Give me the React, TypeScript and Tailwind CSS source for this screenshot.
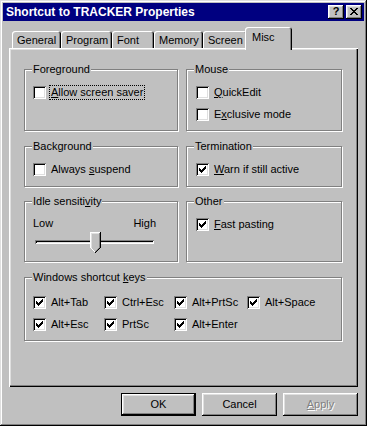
import React from "react";

const raised =
  "shadow-[inset_-1px_-1px_#000,inset_1px_1px_#fff,inset_-2px_-2px_#808080,inset_2px_2px_#dfdfdf]";

function CheckMark() {
  // classic 7x7 pixel tick
  const rows = ["......X", ".....XX", "X...XXX", "XX.XXX.", "XXXXX..", ".XXX...", "..X...."];
  return (
    <svg width="7" height="7" viewBox="0 0 7 7" shapeRendering="crispEdges">
      {rows.map((r, y) =>
        r.split("").map((c, x) => (c === "X" ? <rect key={`${x}-${y}`} x={x} y={y} width="1" height="1" fill="#000" /> : null))
      )}
    </svg>
  );
}

function Box({ checked = false }: { checked?: boolean }) {
  return (
    <span className="w-[13px] h-[13px] shrink-0 bg-white flex items-center justify-center shadow-[inset_1px_1px_#808080,inset_-1px_-1px_#fff,inset_2px_2px_#000,inset_-2px_-2px_#dfdfdf]">
      {checked && <CheckMark />}
    </span>
  );
}

function Option({ label, checked, focus }: { label: React.ReactNode; checked?: boolean; focus?: boolean }) {
  return (
    <div className="flex items-center h-[13px] gap-[4px]">
      <Box checked={checked} />
      <span className={`leading-[13px] whitespace-nowrap ${focus ? "outline outline-1 outline-dotted outline-black px-[1px]" : "px-[1px]"}`}>
        {label}
      </span>
    </div>
  );
}

function Group({ title, className = "", children }: { title: React.ReactNode; className?: string; children?: React.ReactNode }) {
  return (
    <div className={`relative border border-[#808080] shadow-[inset_1px_1px_#fff,1px_1px_#fff] ${className}`}>
      <span className="absolute -top-[7px] left-[7px] px-[1px] bg-[#c0c0c0] leading-[13px] whitespace-nowrap">{title}</span>
      {children}
    </div>
  );
}

function Thumb() {
  return (
    <svg width="11" height="21" viewBox="0 0 11 21" shapeRendering="crispEdges">
      <polygon points="0,0 11,0 11,16 6,21 5,21 0,16" fill="#c0c0c0" />
      <rect x="0" y="0" width="10" height="1" fill="#fff" />
      <rect x="0" y="0" width="1" height="16" fill="#fff" />
      <rect x="1" y="1" width="8" height="1" fill="#dfdfdf" />
      <rect x="1" y="1" width="1" height="15" fill="#dfdfdf" />
      <rect x="10" y="0" width="1" height="16" fill="#000" />
      <rect x="9" y="1" width="1" height="15" fill="#808080" />
      {[0, 1, 2, 3, 4].map((i) => (
        <rect key={`l${i}`} x={i + 1} y={16 + i} width="1" height="1" fill="#fff" />
      ))}
      {[0, 1, 2, 3, 4].map((i) => (
        <rect key={`r${i}`} x={9 - i} y={16 + i} width="1" height="1" fill="#000" />
      ))}
      {[0, 1, 2, 3].map((i) => (
        <rect key={`g${i}`} x={8 - i} y={16 + i} width="1" height="1" fill="#808080" />
      ))}
    </svg>
  );
}

const tabs = ["General", "Program", "Font", "Memory", "Screen"];
const tabWidths = ["w-[49px]", "w-[51px]", "w-[42px]", "w-[49px]", "w-[44px]"];

export default function App() {
  return (
    <div className="w-[367px] h-[426px] bg-[#c0c0c0] p-[3px] flex flex-col font-['Liberation_Sans',Arial,sans-serif] text-[11px] text-black shadow-[inset_-1px_-1px_#000,inset_1px_1px_#dfdfdf,inset_-2px_-2px_#808080,inset_2px_2px_#fff] select-none">
      {/* Title bar */}
      <div className="h-[18px] bg-[#000080] flex items-center pl-[3px] pr-[2px]">
        <span className="text-white font-bold text-[12px] leading-none">Shortcut to TRACKER Properties</span>
        <div className="ml-auto flex gap-[2px]">
          <span className={`w-[16px] h-[14px] bg-[#c0c0c0] ${raised} flex items-center justify-center font-bold text-[11px] leading-none pb-[1px]`}>
            ?
          </span>
          <span className={`w-[16px] h-[14px] bg-[#c0c0c0] ${raised} flex items-center justify-center pb-[1px]`}>
            <svg width="8" height="7" viewBox="0 0 8 7" shapeRendering="crispEdges">
              {[0, 1, 2, 3, 4, 5, 6].map((i) => (
                <React.Fragment key={i}>
                  <rect x={i} y={i} width="2" height="1" fill="#000" />
                  <rect x={6 - i} y={i} width="2" height="1" fill="#000" />
                </React.Fragment>
              ))}
            </svg>
          </span>
        </div>
      </div>

      {/* Tab strip */}
      <div className="mt-[6px] ml-[9px] h-[21px] flex items-end relative z-10">
        {tabs.map((t, i) => (
          <div
            key={t}
            className={`${tabWidths[i]} h-[17px] rounded-t-[3px] pl-[5px] pt-[3px] leading-[13px] shadow-[inset_1px_1px_#fff,inset_-1px_0_#000,inset_-2px_0_#808080]`}
          >
            {t}
          </div>
        ))}
        <div className="w-[47px] h-[23px] -mb-[2px] -ml-[2px] rounded-t-[3px] pl-[7px] pt-[4px] leading-[13px] bg-[#c0c0c0] shadow-[inset_1px_1px_#fff,inset_-1px_0_#000,inset_-2px_0_#808080]">
          Misc
        </div>
      </div>

      {/* Panel */}
      <div className="ml-[6px] w-[349px] h-[339px] pt-[21px] pl-[15px] shadow-[inset_1px_1px_#fff,inset_-1px_-1px_#000,inset_-2px_-2px_#808080,inset_2px_2px_#dfdfdf]">
        <div className="grid grid-cols-[154px_156px] gap-x-[8px]">
          <Group title="Foreground" className="h-[62px] pt-[16px] pl-[8px]">
            <Option
              focus
              label={
                <>
                  <u>A</u>llow screen saver
                </>
              }
            />
          </Group>
          <Group title="Mouse" className="h-[62px] pt-[16px] pl-[9px] flex flex-col gap-[9px]">
            <Option
              label={
                <>
                  <u>Q</u>uickEdit
                </>
              }
            />
            <Option
              label={
                <>
                  E<u>x</u>clusive mode
                </>
              }
            />
          </Group>

          <Group title="Background" className="mt-[15px] h-[41px] pt-[16px] pl-[8px]">
            <Option
              label={
                <>
                  Always <u>s</u>uspend
                </>
              }
            />
          </Group>
          <Group title="Termination" className="mt-[15px] h-[41px] pt-[16px] pl-[9px]">
            <Option
              checked
              label={
                <>
                  <u>W</u>arn if still active
                </>
              }
            />
          </Group>

          <Group
            title={
              <>
                Idle sensiti<u>v</u>ity
              </>
            }
            className="mt-[14px] h-[61px] pt-[15px] pl-[8px]"
          >
            <div className="w-[123px] flex justify-between leading-[13px]">
              <span>Low</span>
              <span>High</span>
            </div>
            <div className="relative ml-[2px] mt-[2px] w-[119px] h-[22px]">
              <div className="absolute left-0 right-0 top-[8px] h-[4px] shadow-[inset_1px_1px_#808080,inset_-1px_-1px_#fff,inset_2px_2px_#000,inset_-2px_-2px_#dfdfdf]" />
              <div className="absolute left-[55px] top-0 leading-none">
                <Thumb />
              </div>
            </div>
          </Group>
          <Group title="Other" className="mt-[14px] h-[61px] pt-[16px] pl-[9px]">
            <Option
              checked
              label={
                <>
                  <u>F</u>ast pasting
                </>
              }
            />
          </Group>

          <Group
            title={
              <>
                Windows shortcut <u>k</u>eys
              </>
            }
            className="col-span-2 mt-[15px] h-[64px] pt-[18px] pl-[8px]"
          >
            <div className="grid grid-cols-[71px_70px_73px_auto] gap-y-[9px]">
              <Option checked label="Alt+Tab" />
              <Option checked label="Ctrl+Esc" />
              <Option checked label="Alt+PrtSc" />
              <Option checked label="Alt+Space" />
              <Option checked label="Alt+Esc" />
              <Option checked label="PrtSc" />
              <Option checked label="Alt+Enter" />
            </div>
          </Group>
        </div>
      </div>

      {/* Buttons */}
      <div className="mt-[6px] mr-[6px] flex justify-end gap-[6px]">
        <button className="w-[75px] h-[23px] border border-black bg-[#c0c0c0] shadow-[inset_-1px_-1px_#000,inset_1px_1px_#fff,inset_-2px_-2px_#808080,inset_2px_2px_#dfdfdf] leading-none">
          OK
        </button>
        <button className={`w-[75px] h-[23px] bg-[#c0c0c0] ${raised} leading-none`}>Cancel</button>
        <button className={`w-[75px] h-[23px] bg-[#c0c0c0] ${raised} leading-none text-[#808080] [text-shadow:1px_1px_0_#fff]`}>
          <u>A</u>pply
        </button>
      </div>
    </div>
  );
}
